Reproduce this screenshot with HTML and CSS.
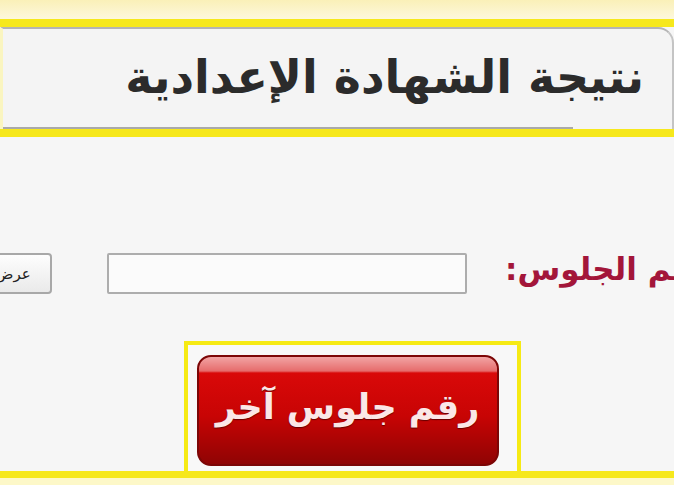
FILE: index.html
```html
<!DOCTYPE html>
<html lang="ar" dir="rtl">
<head>
<meta charset="utf-8">
<link rel="stylesheet" href="styles.css">
</head>
<body>
<div class="page">
  <div class="top-strip"></div>
  <div class="header">
    <div class="header-inner">
      <h1 class="title">نتيجة الشهادة الإعدادية</h1>
      <div class="header-rule"></div>
    </div>
  </div>
  <div class="content">
    <div class="form-row">
      <label class="seat-label">رقم الجلوس:</label>
      <input class="seat-input" type="text">
      <button class="show-btn" type="button">عرض</button>
    </div>
    <div class="cta-frame">
      <button class="cta" type="button">رقم جلوس آخر</button>
    </div>
  </div>
  <div class="bottom-band"></div>
  <div class="bottom-strip"></div>
</div>
</body>
</html>
```

FILE: styles.css
```css
* { box-sizing: border-box; }
html, body { margin: 0; padding: 0; }
body {
  width: 674px;
  height: 485px;
  overflow: hidden;
  background: #f6f6f6;
  font-family: "DejaVu Sans", sans-serif;
}
.page {
  width: 674px;
  height: 485px;
  overflow: hidden;
  display: flex;
  flex-direction: column;
  direction: rtl;
}
.top-strip {
  height: 19px;
  background: linear-gradient(#faf0b8, #fdf8dc);
  flex: none;
}
.header {
  flex: none;
  border-top: 8px solid #f6e81c;
  border-bottom: 8px solid #f6e81c;
  background: #f6f6f6;
}
.header-inner {
  height: 102px;
  background: #f4f4f4;
  border-top: 2px solid #b4b4b4;
  border-right: 2px solid #c4c4c4;
  border-left: 3px solid #faf5c0;
  border-top-right-radius: 16px;
  display: flex;
  flex-direction: column;
  justify-content: space-between;
}
.title {
  margin: 18px 28px 0 0;
  font-size: 46px;
  font-weight: bold;
  color: #2b2b2b;
  line-height: 60px;
  text-align: right;
  white-space: nowrap;
}
.header-rule {
  height: 2px;
  width: 570px;
  margin-right: auto;
  background: #a9a9a9;
}
.content {
  flex: none;
  height: 334px;
  background: #f6f6f6;
  display: flex;
  flex-direction: column;
  align-items: center;
}
.form-row {
  align-self: stretch;
  margin-top: 116px;
  margin-left: -26px;
  display: flex;
  justify-content: flex-end;
  align-items: center;
  height: 41px;
}
.seat-label {
  flex: none;
  font-size: 31px;
  font-weight: bold;
  color: #a3163a;
  line-height: 36px;
  margin-left: 38px;
  padding-bottom: 10px;
  white-space: nowrap;
}
.seat-input {
  flex: none;
  width: 360px;
  height: 41px;
  border: 2px solid #adadad;
  border-radius: 2px;
  background: #fbfbfb;
  margin: 0 0 0 55px;
}
.show-btn {
  flex: none;
  width: 78px;
  height: 41px;
  border: 2px solid #a8a8a8;
  border-radius: 4px;
  background: linear-gradient(#fdfdfd, #eaeaea);
  font-family: "DejaVu Sans", sans-serif;
  font-size: 15px;
  color: #222;
  padding: 0;
}
.cta-frame {
  margin-top: 47px;
  margin-left: 30px;
  width: 337px;
  height: 131px;
  border: 4px solid #f6ea14;
  border-bottom: none;
  padding: 10px 18px 0 9px;
  background: #f8f8f8;
}
.cta {
  display: block;
  width: 302px;
  height: 111px;
  border: 2px solid #7c0606;
  border-radius: 14px;
  background:
    linear-gradient(#f2a4a4 0, #e66c6c 14px, #d90909 16px, #c80404 55%, #8f0404 100%);
  color: #fbe7e7;
  font-family: "DejaVu Sans", sans-serif;
  font-size: 35px;
  font-weight: bold;
  padding: 0 0 8px 0;
  text-shadow: 0 1px 1px #600;
  white-space: nowrap;
}
.bottom-band {
  flex: none;
  height: 7px;
  background: #f6e81c;
}
.bottom-strip {
  flex: none;
  height: 7px;
  background: #fdf8c8;
}
```
